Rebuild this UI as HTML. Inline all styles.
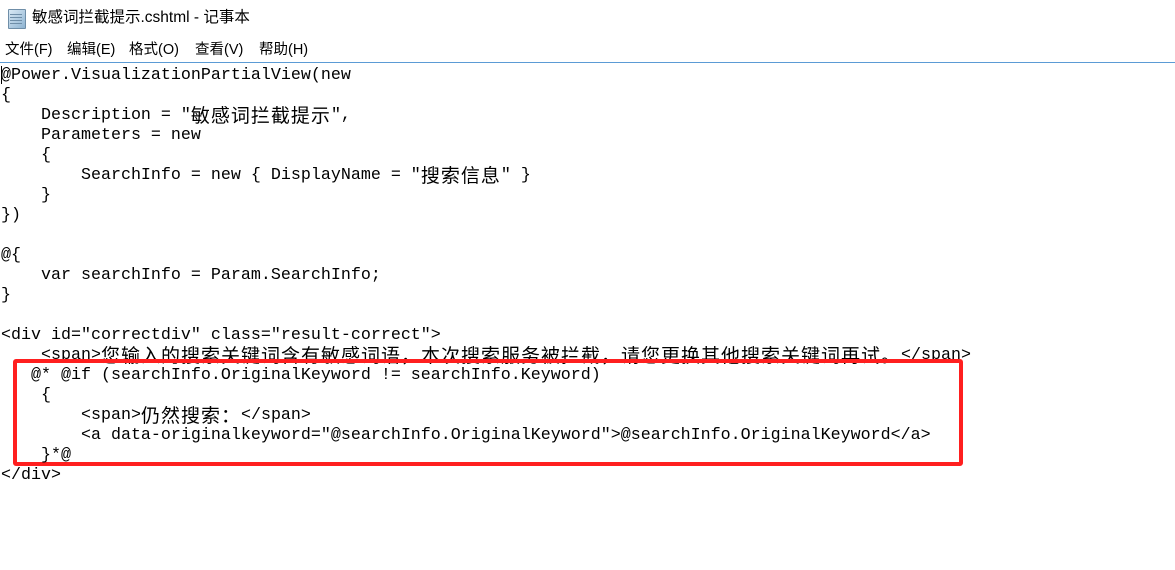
<!DOCTYPE html>
<html><head><meta charset="utf-8"><style>
html,body{margin:0;padding:0;background:#fff;width:1175px;height:570px;overflow:hidden;position:relative}
.ui{font-family:"Liberation Sans","Noto Sans CJK SC",sans-serif;color:#000;position:absolute;white-space:nowrap}
.m{position:absolute;top:40px;font-size:14.5px;line-height:20px}
.l{position:absolute;left:1px;height:20px;line-height:20px;font-family:"Liberation Mono",monospace;font-size:16.67px;white-space:pre;color:#000}
.c{font-family:"Noto Sans CJK SC",sans-serif;font-size:19px;letter-spacing:1px;display:inline-block;line-height:18px;vertical-align:top}
.box{position:absolute;left:13px;top:359px;width:942px;height:99px;border:4px solid #ff1f1f;border-radius:3px}
</style></head><body>
<div style="position:absolute;left:8px;top:9px;width:16px;height:18px;background:linear-gradient(135deg,#d8e8f4,#8fb4d2);border:1px solid #6f8ea8;border-radius:1px"></div>
<div style="position:absolute;left:10px;top:14px;width:12px;height:1px;background:#6f8ea8;box-shadow:0 3px 0 #6f8ea8,0 6px 0 #6f8ea8,0 9px 0 #6f8ea8"></div>
<div class="ui" style="left:32px;top:8px;font-size:15.5px;line-height:20px">敏感词拦截提示.cshtml - 记事本</div>
<div class="ui m" style="left:5px">文件(F)</div>
<div class="ui m" style="left:67px">编辑(E)</div>
<div class="ui m" style="left:129px">格式(O)</div>
<div class="ui m" style="left:195px">查看(V)</div>
<div class="ui m" style="left:259px">帮助(H)</div>
<div style="position:absolute;left:0;top:62px;width:1175px;height:1px;background:#5b9bd5"></div>
<div style="position:absolute;left:1px;top:66px;width:1px;height:18px;background:#000"></div>

<div class="l" style="top:66px">@Power.VisualizationPartialView(new</div>
<div class="l" style="top:86px">{</div>
<div class="l" style="top:106px">    Description = "<span class="c">敏感词拦截提示</span>",</div>
<div class="l" style="top:126px">    Parameters = new</div>
<div class="l" style="top:146px">    {</div>
<div class="l" style="top:166px">        SearchInfo = new { DisplayName = "<span class="c">搜索信息</span>" }</div>
<div class="l" style="top:186px">    }</div>
<div class="l" style="top:206px">})</div>
<div class="l" style="top:246px">@{</div>
<div class="l" style="top:266px">    var searchInfo = Param.SearchInfo;</div>
<div class="l" style="top:286px">}</div>
<div class="l" style="top:326px">&lt;div id="correctdiv" class="result-correct"&gt;</div>
<div class="l" style="top:346px">    &lt;span&gt;<span class="c">您输入的搜索关键词含有敏感词语，本次搜索服务被拦截，请您更换其他搜索关键词再试。</span>&lt;/span&gt;</div>
<div class="box"></div>
<div class="l" style="top:366px">   @* @if (searchInfo.OriginalKeyword != searchInfo.Keyword)</div>
<div class="l" style="top:386px">    {</div>
<div class="l" style="top:406px">        &lt;span&gt;<span class="c">仍然搜索：</span>&lt;/span&gt;</div>
<div class="l" style="top:426px">        &lt;a data-originalkeyword="@searchInfo.OriginalKeyword"&gt;@searchInfo.OriginalKeyword&lt;/a&gt;</div>
<div class="l" style="top:446px">    }*@</div>
<div class="l" style="top:466px">&lt;/div&gt;</div>
</body></html>
